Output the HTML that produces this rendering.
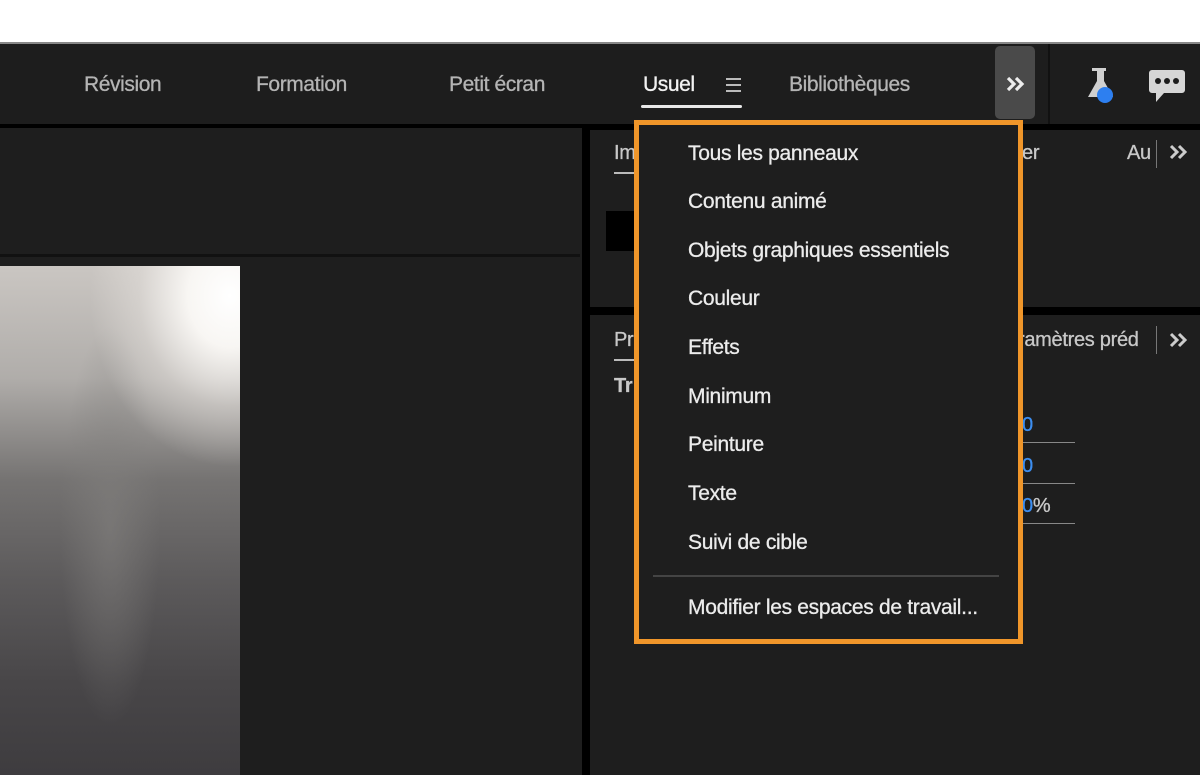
<!DOCTYPE html>
<html><head><meta charset="utf-8"><style>
*{margin:0;padding:0;box-sizing:border-box}
body{width:1200px;height:775px;overflow:hidden;background:#000;font-family:"Liberation Sans",sans-serif;position:relative}
.a{position:absolute}
.tab{position:absolute;top:73px;font-size:21px;color:#b4b4b4;white-space:nowrap;letter-spacing:-0.4px;-webkit-text-stroke:0.3px currentColor}
.mi{position:absolute;left:688px;font-size:21px;color:#ececec;white-space:nowrap;letter-spacing:-0.3px;-webkit-text-stroke:0.3px currentColor}
.pt{position:absolute;font-size:20px;color:#c8c8c8;white-space:nowrap;letter-spacing:-0.3px;-webkit-text-stroke:0.3px currentColor}
.blue{color:#3d8ef0}
</style></head><body>
<div class="a" style="left:0;top:0;width:1200px;height:42px;background:#fff"></div>
<div class="a" style="left:0;top:42px;width:1200px;height:2px;background:#888"></div>
<div class="a" style="left:0;top:44px;width:1200px;height:80px;background:#1d1d1d"></div>
<div class="tab" style="left:84px">Révision</div>
<div class="tab" style="left:256px">Formation</div>
<div class="tab" style="left:449px">Petit écran</div>
<div class="tab" style="left:643px;color:#f2f2f2">Usuel</div>
<div class="a" style="left:641px;top:105px;width:101px;height:3px;background:#e8e8e8;border-radius:2px"></div>
<div class="a" style="left:726px;top:78px;width:15px;height:2px;background:#bbb;box-shadow:0 6px 0 #bbb,0 12px 0 #bbb"></div>
<div class="tab" style="left:789px">Bibliothèques</div>
<div class="a" style="left:995px;top:46px;width:40px;height:73px;background:#4a4a4a;border-radius:5px"></div>
<svg class="a" style="left:1006px;top:76px" width="20" height="16" viewBox="0 0 20 16"><path d="M2 2l6 6-6 6M10 2l6 6-6 6" fill="none" stroke="#eee" stroke-width="3.2"/></svg>
<div class="a" style="left:1048px;top:44px;width:2px;height:80px;background:#111"></div>
<svg class="a" style="left:1086px;top:66px" width="40" height="42" viewBox="0 0 40 42">
<path d="M6 2h14v3h-2v10l9 16H2l9-16V5H6z" fill="#d0d0d0"/>
<circle cx="19" cy="29" r="8" fill="#2d7ff0"/></svg>
<svg class="a" style="left:1148px;top:68px" width="38" height="36" viewBox="0 0 38 36">
<path d="M4 2h30a3 3 0 0 1 3 3v17a3 3 0 0 1-3 3H16l-8 9v-9H4a3 3 0 0 1-3-3V5a3 3 0 0 1 3-3z" fill="#d6d6d6"/>
<circle cx="10" cy="13" r="3" fill="#1d1d1d"/><circle cx="19" cy="13" r="3" fill="#1d1d1d"/><circle cx="28" cy="13" r="3" fill="#1d1d1d"/></svg>

<div class="a" style="left:0;top:128px;width:582px;height:647px;background:#1e1e1e"></div>
<div class="a" style="left:0;top:254px;width:580px;height:3px;background:#111"></div>
<div class="a" style="left:0;top:266px;width:240px;height:509px;background:
radial-gradient(ellipse 140px 170px at 230px 30px,#fff 0%,#f8f6f3 30%,rgba(230,226,222,0.5) 65%,rgba(230,226,222,0) 100%),
radial-gradient(ellipse 50px 200px at 110px 260px,rgba(130,128,126,.6),rgba(130,128,126,0)),
linear-gradient(180deg,#cac6c2 0%,#b0adaa 22%,#757372 42%,#5c5a5b 62%,#484648 82%,#3e3c3f 100%)"></div>

<div class="a" style="left:590px;top:130px;width:610px;height:177px;background:#1e1e1e"></div>
<div class="a" style="left:590px;top:315px;width:610px;height:460px;background:#1e1e1e"></div>
<div class="pt" style="left:614px;top:142px">Im</div>
<div class="a" style="left:614px;top:172px;width:40px;height:2px;background:#bbb"></div>
<div class="a" style="left:606px;top:211px;width:40px;height:40px;background:#000"></div>
<div class="pt" style="left:1022px;top:142px">er</div>
<div class="pt" style="left:1127px;top:142px">Au</div>
<div class="a" style="left:1156px;top:140px;width:1px;height:28px;background:#777"></div>
<svg class="a" style="left:1169px;top:144px" width="20" height="16" viewBox="0 0 20 16"><path d="M2 2l6 6-6 6M10 2l6 6-6 6" fill="none" stroke="#ccc" stroke-width="3"/></svg>
<div class="pt" style="left:614px;top:329px">Pr</div>
<div class="a" style="left:614px;top:359px;width:40px;height:2px;background:#bbb"></div>
<div class="pt" style="left:614px;top:375px;font-weight:bold">Tr</div>
<div class="pt" style="left:1018px;top:329px">ramètres préd</div>
<div class="a" style="left:1156px;top:326px;width:1px;height:28px;background:#777"></div>
<svg class="a" style="left:1169px;top:332px" width="20" height="16" viewBox="0 0 20 16"><path d="M2 2l6 6-6 6M10 2l6 6-6 6" fill="none" stroke="#ccc" stroke-width="3"/></svg>
<div class="pt blue" style="left:1022px;top:414px">0</div>
<div class="a" style="left:1020px;top:442px;width:55px;height:1px;background:#888"></div>
<div class="pt blue" style="left:1022px;top:455px">0</div>
<div class="a" style="left:1020px;top:483px;width:55px;height:1px;background:#888"></div>
<div class="pt" style="left:1022px;top:495px"><span class="blue">0</span>%</div>
<div class="a" style="left:1020px;top:523px;width:55px;height:1px;background:#888"></div>

<div class="a" style="left:634px;top:120px;width:389px;height:524px;border:5px solid #f0962a;background:#1e1e1e"></div>
<div class="mi" style="top:142px">Tous les panneaux</div>
<div class="mi" style="top:190px">Contenu animé</div>
<div class="mi" style="top:239px">Objets graphiques essentiels</div>
<div class="mi" style="top:287px">Couleur</div>
<div class="mi" style="top:336px">Effets</div>
<div class="mi" style="top:385px">Minimum</div>
<div class="mi" style="top:433px">Peinture</div>
<div class="mi" style="top:482px">Texte</div>
<div class="mi" style="top:531px">Suivi de cible</div>
<div class="a" style="left:653px;top:575px;width:346px;height:2px;background:#444"></div>
<div class="mi" style="top:596px">Modifier les espaces de travail...</div>
</body></html>
